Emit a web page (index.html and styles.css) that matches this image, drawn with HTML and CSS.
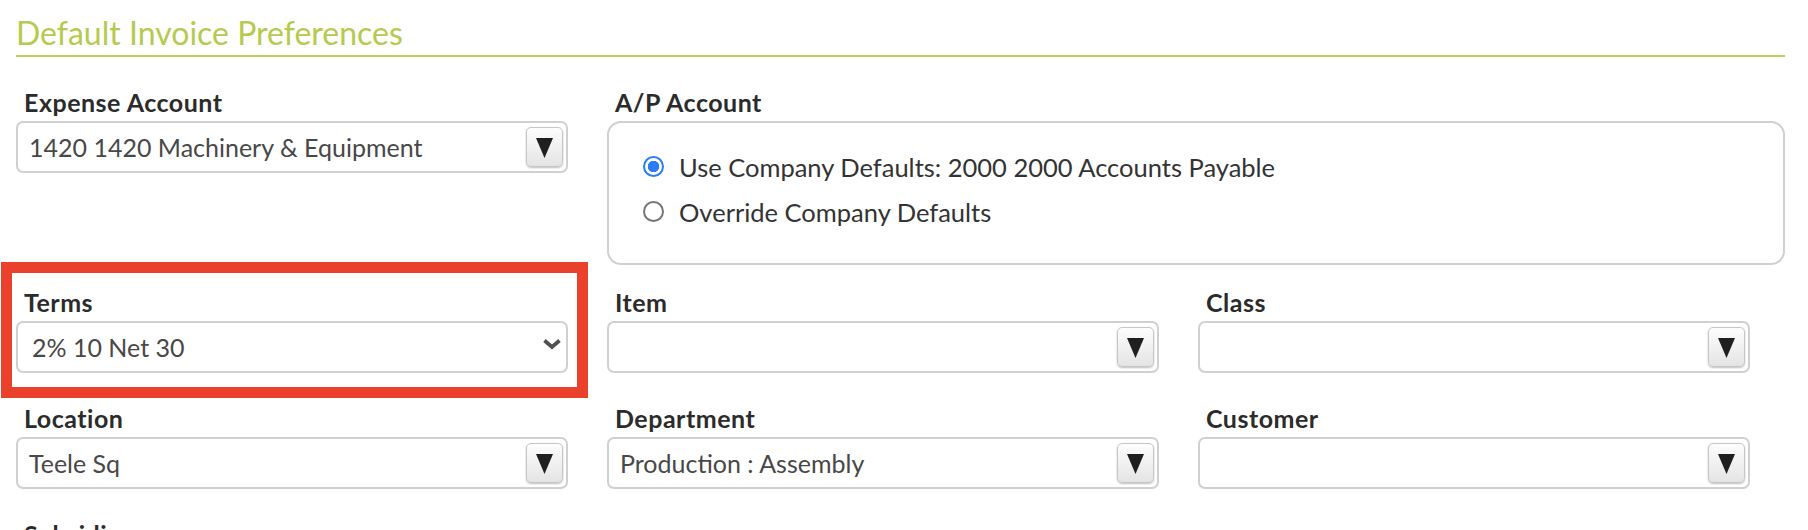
FILE: index.html
```html
<!DOCTYPE html>
<html>
<head>
<meta charset="utf-8" />
<title>Default Invoice Preferences</title>
<link rel="stylesheet" href="styles.css">
</head>
<body>
<div class="page">
    <h2 class="section-title">Default Invoice Preferences</h2>

    <div class="row row-top">
        <div class="field">
            <label class="field-label">Expense Account</label>
            <div class="combo">
                <span class="combo-value">1420 1420 Machinery &amp; Equipment</span>
                <span class="combo-btn"><svg width="17" height="20" viewBox="0 0 17 20"><polygon points="0,0 17,0 8.5,20" /></svg></span>
            </div>
        </div>
        <div class="field field-wide">
            <label class="field-label">A/P Account</label>
            <div class="radio-box">
                <label class="radio-row"><span class="radio radio-on"></span>Use Company Defaults: 2000 2000 Accounts Payable</label>
                <label class="radio-row"><span class="radio"></span>Override Company Defaults</label>
            </div>
        </div>
    </div>

    <div class="row">
        <div class="field field-flagged">
            <label class="field-label">Terms</label>
            <div class="combo combo-native">
                <span class="combo-value">2% 10 Net 30</span>
                <svg class="chevron" width="20" height="12" viewBox="0 0 20 12"><polyline points="2.5,2.5 10,9 17.5,2.5" /></svg>
            </div>
        </div>
        <div class="field">
            <label class="field-label">Item</label>
            <div class="combo">
                <span class="combo-value"></span>
                <span class="combo-btn"><svg width="17" height="20" viewBox="0 0 17 20"><polygon points="0,0 17,0 8.5,20" /></svg></span>
            </div>
        </div>
        <div class="field">
            <label class="field-label">Class</label>
            <div class="combo">
                <span class="combo-value"></span>
                <span class="combo-btn"><svg width="17" height="20" viewBox="0 0 17 20"><polygon points="0,0 17,0 8.5,20" /></svg></span>
            </div>
        </div>
    </div>

    <div class="row">
        <div class="field">
            <label class="field-label">Location</label>
            <div class="combo">
                <span class="combo-value">Teele Sq</span>
                <span class="combo-btn"><svg width="17" height="20" viewBox="0 0 17 20"><polygon points="0,0 17,0 8.5,20" /></svg></span>
            </div>
        </div>
        <div class="field">
            <label class="field-label">Department</label>
            <div class="combo">
                <span class="combo-value">Production : Assembly</span>
                <span class="combo-btn"><svg width="17" height="20" viewBox="0 0 17 20"><polygon points="0,0 17,0 8.5,20" /></svg></span>
            </div>
        </div>
        <div class="field">
            <label class="field-label">Customer</label>
            <div class="combo">
                <span class="combo-value"></span>
                <span class="combo-btn"><svg width="17" height="20" viewBox="0 0 17 20"><polygon points="0,0 17,0 8.5,20" /></svg></span>
            </div>
        </div>
    </div>

    <div class="row">
        <div class="field">
            <label class="field-label">Subsidiary</label>
        </div>
    </div>
</div>
</body>
</html>
```

FILE: styles.css
```css
body {
    margin:0;
    background:#fff;
    font-family:Lato, "Liberation Sans", sans-serif;
    color:#333;
}
.page {
    padding:0 0 0 16px;
    width:1769px;
}
.section-title {/*标题 + 绿色分隔线*/
    margin:0 0 31px 0;
    padding:14px 0 3px 0;
    font-size:32px;
    font-weight:400;
    line-height:38px;
    color:#b5ca4e;
    border-bottom:2px solid #bccf5a;
}
.row {
    display:flex;
    gap:39px;
    margin-bottom:31px;
}
.row-top {
    margin-bottom:23px;
}
.field {
    width:552px;
    flex:none;
}
.field-wide {
    width:1178px;
}
.field-label {
    display:block;
    padding-left:8px;
    font-size:25px;
    font-weight:700;
    letter-spacing:0.5px;
    line-height:28px;
    margin-bottom:5px;
    color:#2b2b2b;
}
.combo {/*下拉框*/
    display:flex;
    align-items:center;
    box-sizing:border-box;
    height:52px;
    padding:0 3px 0 11px;
    border:2px solid #d0d0d0;
    border-radius:7px;
    font-size:25px;
    color:#484848;
}
.combo-value {
    flex:1;
}
.combo-btn {
    display:flex;
    align-items:center;
    justify-content:center;
    box-sizing:border-box;
    width:37px;
    height:40px;
    border:1px solid #c6c6c6;
    border-radius:5px;
    background:linear-gradient(#fdfdfd, #e4e4e4);
    box-shadow:0 1px 2px rgba(0,0,0,.25);
}
.combo-btn svg {
    fill:#1f1f1f;
    margin-top:1px;
}
.combo-native {
    padding:0 4px 0 14px;
}
.chevron {
    fill:none;
    stroke:#505050;
    stroke-width:3.8;
    margin-top:-6px;
}
.field-flagged {/*红色标注框*/
    position:relative;
}
.field-flagged::after {
    content:"";
    position:absolute;
    top:-26px;
    left:-15px;
    right:-20px;
    bottom:-25px;
    border:11px solid #e9412b;
}
.radio-box {
    box-sizing:border-box;
    height:144px;
    padding:21px 30px 0 34px;
    border:2px solid #d0d0d0;
    border-radius:14px;
}
.radio-row {
    display:flex;
    align-items:center;
    height:45px;
    font-size:25.5px;
    color:#333;
}
.radio {
    box-sizing:border-box;
    width:21px;
    height:21px;
    margin-right:15px;
    border:2px solid #767676;
    border-radius:50%;
}
.radio-on {
    border-color:#2b7cf5;
    background:radial-gradient(circle, #2b7cf5 0 5.5px, #fff 6px);
}
```
